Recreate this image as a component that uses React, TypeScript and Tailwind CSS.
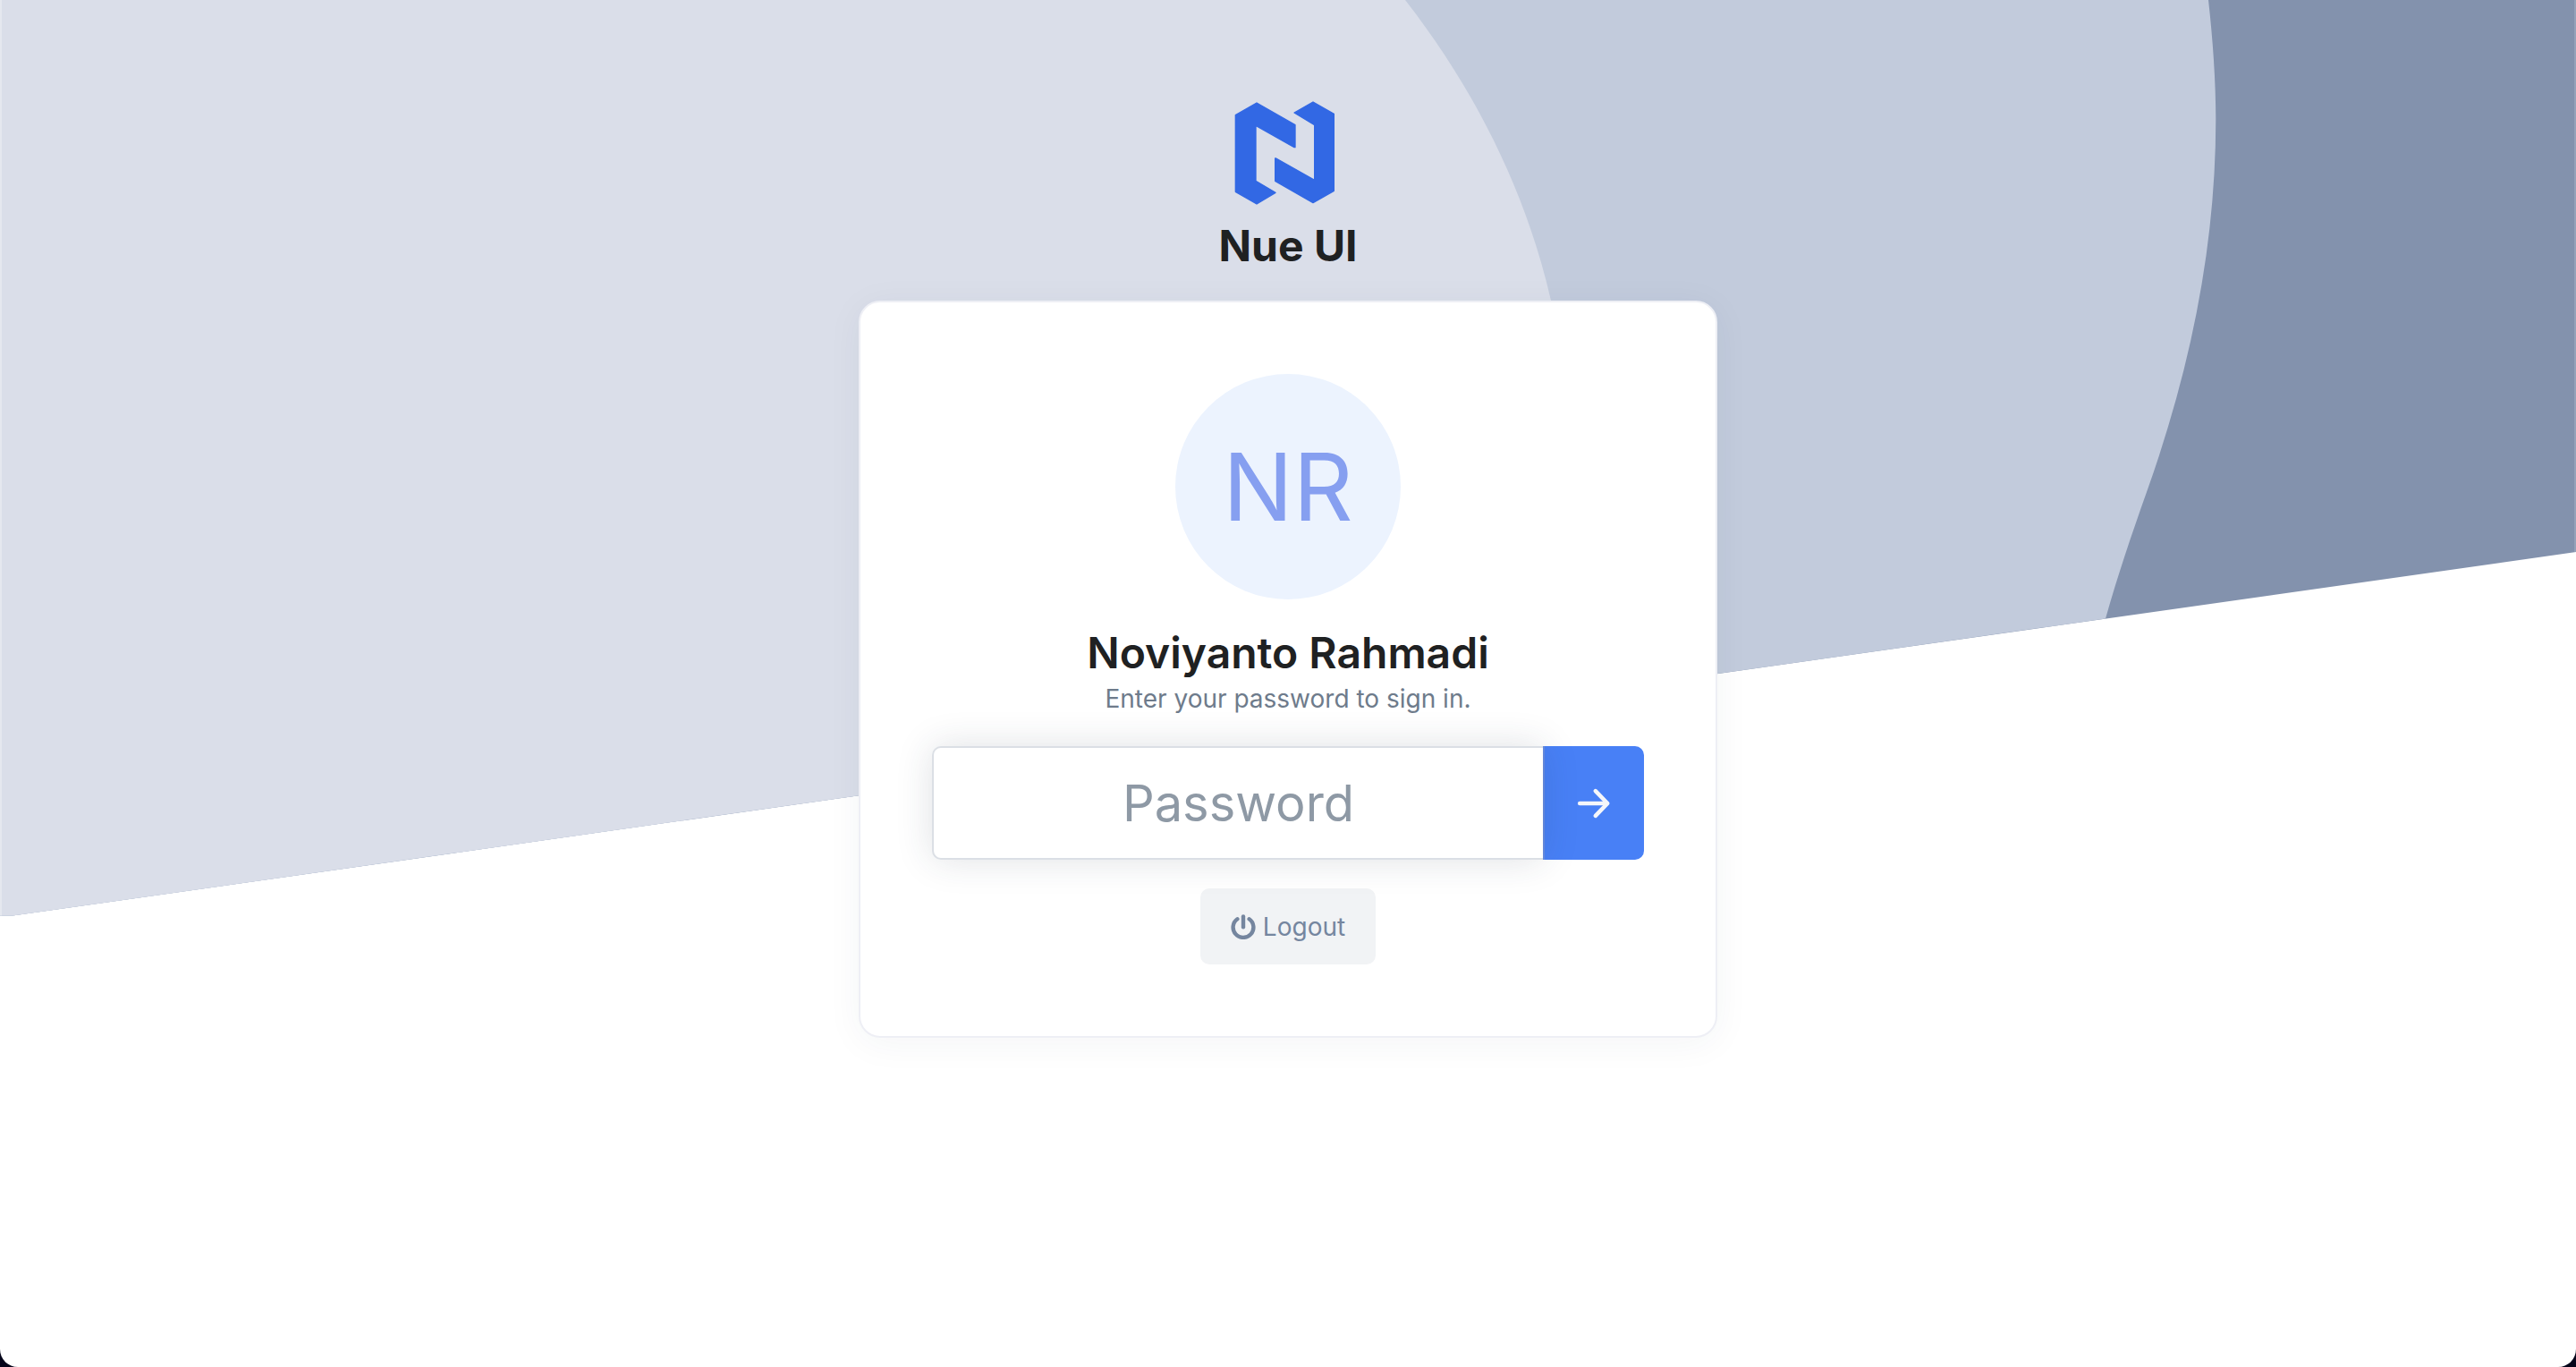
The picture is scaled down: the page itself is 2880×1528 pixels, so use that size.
import React from "react";

function Backdrop() {
  return (
    <svg
      aria-hidden="true"
      viewBox="0 0 2880 1024"
      className="absolute inset-x-0 top-0 h-auto w-full"
    >
      <path d="M0 0H2880V617L14 1023.5H0Z" fill="#8392ad" />
      <path
        d="M0 0H2469C2474 45 2477.3 90 2477.3 133C2477.3 272 2450 410 2400 550C2383 598 2368 642 2354 691.5L14 1023.5H0Z"
        fill="#c2cbdc"
      />
      <path
        d="M0 0H1571C1652 104 1707 218 1734 336C1750 410 1754 500 1740 778.5L14 1023.5H0Z"
        fill="#dadee9"
      />
      <path d="M0 0H2V1023.5H0Z" fill="#ffffff" fillOpacity="0.3" />
      <path d="M2878 0H2880V617H2878Z" fill="#ffffff" fillOpacity="0.15" />
    </svg>
  );
}

function Logo() {
  return (
    <svg aria-hidden="true" viewBox="120 68 360 348" className="h-[116px] w-[120px]">
      <g fill="#3268e4" stroke="#3268e4" strokeWidth="4" strokeLinejoin="round">
        <path d="M124 115L195 74L324 148V223L321 223L192 150V336L258 375L195 413L124 372Z" />
        <path d="M321 107L384 71L454 111V369L384 409L257 336V260L260 260L389 333V148Z" />
      </g>
    </svg>
  );
}

function ArrowIcon() {
  return (
    <svg
      aria-hidden="true"
      viewBox="0 0 40 40"
      fill="none"
      stroke="currentColor"
      strokeWidth="4.6"
      strokeLinecap="round"
      strokeLinejoin="round"
      className="size-10"
    >
      <path d="M3.2 20H33.5" />
      <path d="M20.8 6.2L34.2 20L20.8 33.8" />
    </svg>
  );
}

function PowerIcon() {
  return (
    <svg
      aria-hidden="true"
      viewBox="0 0 28 28"
      fill="none"
      stroke="currentColor"
      strokeWidth="4.4"
      strokeLinecap="round"
      className="size-7"
    >
      <path d="M7.4 5.2A11.4 11.4 0 1 0 20.6 5.2" />
      <path d="M14 2.4V14.2" />
    </svg>
  );
}

export default function App() {
  return (
    <div className="bg-[#05051a]">
      <div className="relative min-h-screen overflow-hidden rounded-b-[20px] bg-white font-['Inter',sans-serif]">
        <Backdrop />
        <main className="relative flex flex-col items-center px-6 pt-[113px] pb-20">
          <Logo />
          <h1 className="mt-4 text-[48px] leading-[60px] font-bold text-[#1f2122]">Nue UI</h1>

          <section className="mt-[31px] flex w-full max-w-[960px] flex-col items-center rounded-3xl border-2 border-[#eeeff5] bg-white p-20 shadow-[0_6px_40px_rgba(43,55,72,0.05)]">
            <div className="flex size-[252px] items-center justify-center rounded-full bg-[#ecf3fe] text-[104px] leading-none text-[#869ff0]">
              NR
            </div>
            <h2 className="mt-[30px] text-[48px] leading-[60px] font-semibold text-[#1f2122]">
              Noviyanto Rahmadi
            </h2>
            <p className="text-[28px] leading-[42px] text-[#6e7b8b]">Enter your password to sign in.</p>

            <form className="mt-8 flex w-full" onSubmit={(e) => e.preventDefault()}>
              <input
                type="password"
                aria-label="Password"
                placeholder="Password"
                className="relative z-10 h-[127px] min-w-0 flex-1 rounded-l-[10px] border-2 border-r-0 border-[#dbdfe5] bg-white text-center text-[56px] text-[#1f2122] shadow-[0_0_40px_rgba(43,55,72,0.15)] outline-none placeholder:text-[#8e99a5] placeholder:opacity-100"
              />
              <button
                type="submit"
                aria-label="Sign in"
                className="flex w-[113px] items-center justify-center rounded-r-[10px] border-l-2 border-[#668ce2] bg-[#4880f6] text-[#f5f6fa]"
              >
                <ArrowIcon />
              </button>
            </form>

            <button
              type="button"
              className="mt-8 flex h-[85px] items-center gap-2 rounded-[10px] border-2 border-[#f1f3f5] bg-[#f1f3f5] px-8 text-[28px] text-[#75869f]"
            >
              <PowerIcon />
              Logout
            </button>
          </section>
        </main>
      </div>
    </div>
  );
}
